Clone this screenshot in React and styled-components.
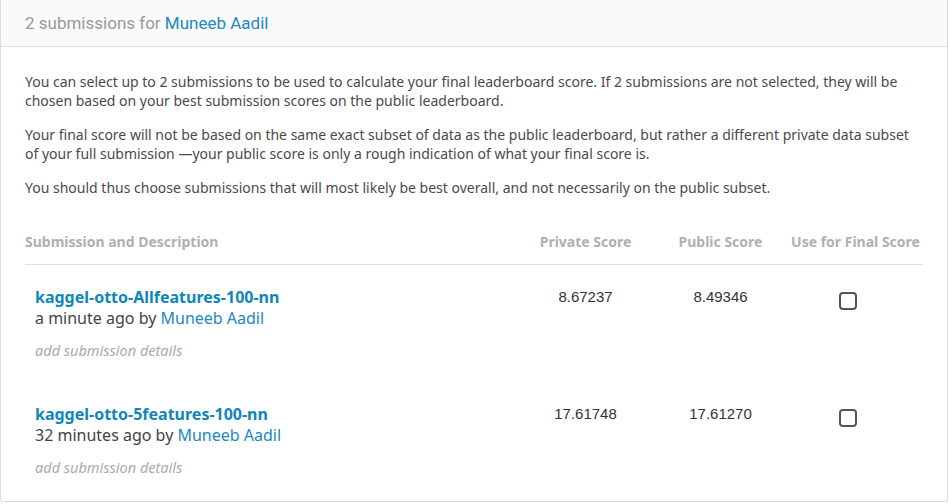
import React from 'react'
import styled, { createGlobalStyle } from 'styled-components'

const GlobalStyle = createGlobalStyle`
  body {
    margin: 0;
    background: #fff;
    font-family: "Noto Sans", Roboto, "Liberation Sans", sans-serif;
    color: #444;
  }
`

const Card = styled.div`
  width: 948px;
  box-sizing: border-box;
  border: 1px solid #ddd;
  border-top: none;
  border-radius: 0 0 3px 3px;
  background: #fff;
`

const Header = styled.div`
  height: 47px;
  box-sizing: border-box;
  padding: 0 24px;
  display: flex;
  align-items: center;
  background: #fafafa;
  border-bottom: 1px solid #e0e0e0;
  font-family: Roboto, "Liberation Sans", sans-serif;
  font-size: 17px;
  color: #999;
`

const Link = styled.a`
  color: ${props => (props.strong ? '#0f86b8' : '#2189c0')};
  font-weight: ${props => (props.strong ? 700 : 400)};
  text-decoration: none;
  cursor: pointer;
`

const Body = styled.div`
  padding: 25px 24px 1px;
`

const Paragraph = styled.p`
  margin: 0 0 15px;
  font-size: 14px;
  line-height: 19px;
  color: #4a4a4a;
`

const Table = styled.div`
  margin-top: 35px;
`

const Grid = styled.div`
  display: grid;
  grid-template-columns: 1fr 135px 135px 135px;
`

const HeadRow = styled(Grid)`
  padding-bottom: 12px;
  border-bottom: 1px solid #ddd;
`

const HeadCell = styled.div`
  font-size: 14px;
  font-weight: 700;
  line-height: 20px;
  color: #b0b0b0;
  text-align: ${props => (props.left ? 'left' : 'center')};
`

const Row = styled(Grid)`
  padding: ${props => (props.first ? '22px' : '21px')} 0 23px;
`

const Info = styled.div`
  padding-left: 10px;
`

const Title = styled.div`
  font-size: 16px;
  line-height: 21px;
`

const Meta = styled.div`
  font-size: 16px;
  line-height: 20px;
  color: #444;
`

const Details = styled.div`
  margin-top: 12px;
  font-size: 14.5px;
  line-height: 20px;
  font-style: italic;
  color: #aaa;
`

const Score = styled.div`
  font-family: "Liberation Sans", Arial, sans-serif;
  font-size: 15px;
  line-height: 20px;
  color: #333;
  text-align: center;
`

const CheckCell = styled.div`
  display: flex;
  justify-content: center;
  padding-top: 5px;
`

const Checkbox = styled.span`
  display: block;
  width: 18px;
  height: 18px;
  box-sizing: border-box;
  border: 2px solid #555;
  border-radius: 4px;
  margin-left: -16px;
  cursor: pointer;
`

const submissions = [
  {
    name: 'kaggel-otto-Allfeatures-100-nn',
    when: 'a minute ago',
    priv: '8.67237',
    pub: '8.49346'
  },
  {
    name: 'kaggel-otto-5features-100-nn',
    when: '32 minutes ago',
    priv: '17.61748',
    pub: '17.61270'
  }
]

const App = () => (
  <>
    <GlobalStyle />
    <Card>
      <Header>
        2 submissions for&nbsp;<Link>Muneeb Aadil</Link>
      </Header>
      <Body>
        <Paragraph>
          You can select up to 2 submissions to be used to calculate your final
          leaderboard score. If 2 submissions are not selected, they will be
          chosen based on your best submission scores on the public leaderboard.
        </Paragraph>
        <Paragraph>
          Your final score will not be based on the same exact subset of data as
          the public leaderboard, but rather a different private data subset of
          your full submission —your public score is only a rough indication of
          what your final score is.
        </Paragraph>
        <Paragraph>
          You should thus choose submissions that will most likely be best
          overall, and not necessarily on the public subset.
        </Paragraph>

        <Table>
          <HeadRow>
            <HeadCell left>Submission and Description</HeadCell>
            <HeadCell>Private Score</HeadCell>
            <HeadCell>Public Score</HeadCell>
            <HeadCell>Use for Final Score</HeadCell>
          </HeadRow>
          {submissions.map((s, i) => (
            <Row key={s.name} first={i === 0}>
              <Info>
                <Title>
                  <Link strong>{s.name}</Link>
                </Title>
                <Meta>
                  {s.when} by <Link>Muneeb Aadil</Link>
                </Meta>
                <Details>add submission details</Details>
              </Info>
              <Score>{s.priv}</Score>
              <Score>{s.pub}</Score>
              <CheckCell>
                <Checkbox />
              </CheckCell>
            </Row>
          ))}
        </Table>
      </Body>
    </Card>
  </>
)

export default App
